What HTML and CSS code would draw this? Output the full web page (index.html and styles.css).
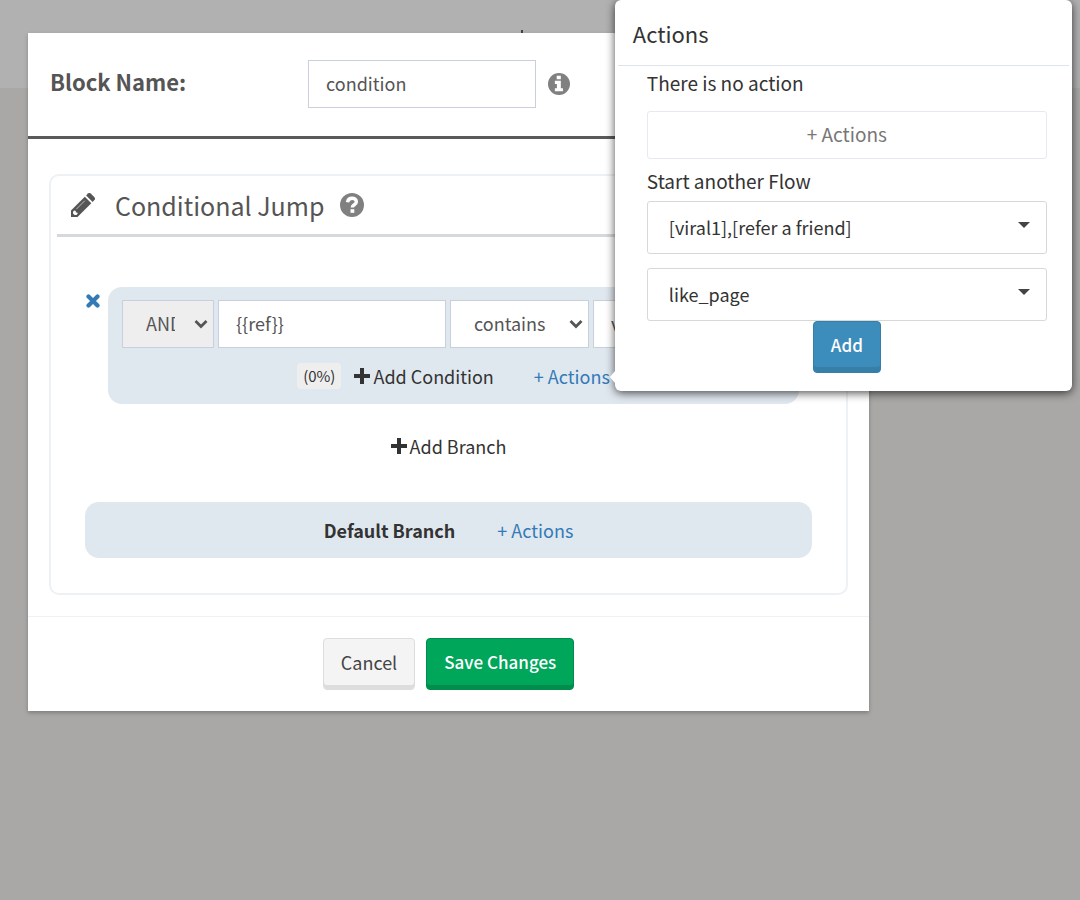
FILE: index.html
```
<!DOCTYPE html>
<html lang="en">

<head>
    <meta charset="UTF-8">
    <meta name="viewport" content="width=device-width, initial-scale=1.0">
    <title>Conditional Jump</title>
    <link rel="stylesheet" href="styles.css">
</head>

<body>
    <div class="page-header">
        <span class="marker"></span>
    </div>

    <div class="overlay">
        <div class="modal" role="dialog" aria-label="Edit block">
            <div class="modal-header">
                <label class="block-label" for="blockName">Block Name:</label>
                <input class="field block-name" type="text" id="blockName" value="condition">
                <svg class="icon-info" viewBox="0 0 24 24" aria-hidden="true">
                    <circle cx="12" cy="12" r="12" fill="#808080"/>
                    <path d="M9.500 3h4.500v3.800H9.500zM7.500 8.500H14v8h2.300V20H7.500v-3.500h2.200V12H7.500z" fill="#fff"/>
                </svg>
            </div>

            <div class="modal-body">
                <div class="panel">
                    <h2 class="panel-title">
                        <svg class="icon-pencil" viewBox="0 0 24 24" aria-hidden="true">
                            <path d="M0 24V17.500L13.800 3.700l6.500 6.500L6.500 24z" fill="#555"/>
                            <path d="M15.100 2.400L16.900.6a2 2 0 0 1 2.800 0l3.700 3.700a2 2 0 0 1 0 2.800l-1.800 1.800z" fill="#555"/>
                            <path d="M2 18.800l1.300-1.300 1.500.4v1.500h1.500l.4 1.400L5.400 22H3.600L2 20.400z" fill="#fff"/>
                            <path d="M5.300 16.200L13.800 7.700" stroke="#bbb" stroke-width="1"/>
                        </svg>
                        <span>Conditional Jump</span>
                        <svg class="icon-help" viewBox="0 0 24 24" aria-hidden="true">
                            <circle cx="12" cy="12" r="12" fill="#808080"/>
                            <path d="M7.500 9.300C8 6.500 9.800 5.300 12.100 5.300c2.300 0 4.300 1.300 4.300 3.500 0 3-4.100 2.800-4.100 5.600" fill="none" stroke="#fff" stroke-width="3.400"/>
                            <path d="M10.500 16.200h3.800v3.600h-3.800z" fill="#fff"/>
                        </svg>
                    </h2>

                    <div class="branches">
                        <div class="branch-row">
                            <button class="remove" type="button" aria-label="Remove branch">
                                <svg viewBox="0 0 14 14" aria-hidden="true">
                                    <path d="M2.500 2.500l9 9M11.500 2.500l-9 9" stroke="#337ab7" stroke-width="4.200" stroke-linecap="round"/>
                                </svg>
                            </button>
                            <div class="branch">
                                <div class="condition">
                                    <div class="select-wrap operator">
                                        <select class="field" aria-label="Operator">
                                            <option>AND</option>
                                            <option>OR</option>
                                        </select>
                                        <svg class="chevron" viewBox="0 0 14 10" aria-hidden="true">
                                            <path d="M1.500 2l5.500 5.500L12.500 2" fill="none" stroke="#555" stroke-width="2.800"/>
                                        </svg>
                                    </div>
                                    <input class="field variable" type="text" value="{{ref}}" aria-label="Variable">
                                    <div class="select-wrap comparison">
                                        <select class="field" aria-label="Comparison">
                                            <option>contains</option>
                                            <option>equals</option>
                                        </select>
                                        <svg class="chevron" viewBox="0 0 14 10" aria-hidden="true">
                                            <path d="M1.500 2l5.500 5.500L12.500 2" fill="none" stroke="#555" stroke-width="2.800"/>
                                        </svg>
                                    </div>
                                    <input class="field value" type="text" value="viral1" aria-label="Value">
                                </div>
                                <div class="branch-actions">
                                    <span class="percent">(0%)</span>
                                    <a class="add" href="#">
                                        <svg viewBox="0 0 16 16" aria-hidden="true"><path d="M6 0h4v6h6v4h-6v6H6v-6H0V6h6z" fill="#333"/></svg>
                                        Add Condition
                                    </a>
                                    <div class="popover-anchor">
                                        <a class="actions-link" href="#">+ Actions</a>
                                        <div class="popover">
                                            <h3 class="popover-title">Actions</h3>
                                            <div class="popover-body">
                                                <p>There is no action</p>
                                                <button class="btn-actions" type="button">+ Actions</button>
                                                <label for="flow">Start another Flow</label>
                                                <div class="select-wrap flow">
                                                    <select id="flow">
                                                        <option>[viral1],[refer a friend]</option>
                                                    </select>
                                                    <span class="caret"></span>
                                                </div>
                                                <div class="select-wrap flow">
                                                    <select aria-label="Block">
                                                        <option>like_page</option>
                                                    </select>
                                                    <span class="caret"></span>
                                                </div>
                                                <button class="btn btn-primary" type="button">Add</button>
                                            </div>
                                        </div>
                                    </div>
                                </div>
                            </div>
                        </div>

                        <a class="add add-branch" href="#">
                            <svg viewBox="0 0 16 16" aria-hidden="true"><path d="M6 0h4v6h6v4h-6v6H6v-6H0V6h6z" fill="#333"/></svg>
                            Add Branch
                        </a>

                        <div class="default-branch">
                            <strong>Default Branch</strong>
                            <a class="actions-link" href="#">+ Actions</a>
                        </div>
                    </div>
                </div>
            </div>

            <div class="modal-footer">
                <button class="btn btn-default" type="button">Cancel</button>
                <button class="btn btn-success" type="button">Save Changes</button>
            </div>
        </div>
    </div>
</body>

</html>
```
FILE: styles.css
```
* {
    box-sizing: border-box;
}

body {
    margin: 0;
    min-height: 100vh;
    background-color: #a9a8a6;
    color: #333;
    font-family: "Noto Sans CJK SC", "Open Sans", sans-serif;
    font-size: 18px;
    line-height: 26px;
}

input,
select,
button {
    font-family: inherit;
    font-size: 18px;
    line-height: 26px;
}

a {
    color: #337ab7;
    text-decoration: none;
}

.page-header {
    height: 88px;
    padding: 30px 0 0 521px;
    background-color: #b1b1b1;
}

.marker {
    display: block;
    width: 2px;
    height: 8px;
    background-color: #444;
}

.overlay {
    position: absolute;
    inset: 0;
    padding: 33px 211px 33px 28px;
}

.modal {
    background-color: #fff;
    box-shadow: 0 2px 4px rgba(0, 0, 0, 0.25);
}

.modal-header {
    display: flex;
    align-items: center;
    padding: 27px 22px 28px;
    border-bottom: 3px solid #5a5a5a;
}

.block-label {
    width: 258px;
    padding-bottom: 7px;
    color: #555;
    font-size: 22px;
    font-weight: bold;
}

.field {
    height: 48px;
    padding: 0 17px 2px;
    border: 1px solid #c9cfdc;
    border-radius: 0;
    background-color: #fff;
    color: #555;
}

.block-name {
    width: 228px;
}

.icon-info {
    width: 22px;
    height: 22px;
    margin-left: 12px;
}

.modal-body {
    padding: 35px 21px 21px;
}

.panel {
    padding: 0 6px 35px;
    border: 2px solid #eef1f4;
    border-radius: 10px;
}

.panel-title {
    display: flex;
    align-items: center;
    height: 61px;
    margin: 0;
    padding: 0 14px 1px;
    border-bottom: 3px solid #d5d9dd;
    color: #555;
    font-size: 25px;
    font-weight: normal;
}

.icon-pencil {
    width: 24px;
    height: 24px;
    margin-right: 20px;
}

.icon-help {
    width: 24px;
    height: 24px;
    margin-left: 16px;
}

.branches {
    display: flex;
    flex-direction: column;
    padding: 50px 28px 0;
}

.branch-row {
    display: flex;
    align-items: flex-start;
    gap: 8px;
    padding-right: 13px;
}

.remove {
    width: 15px;
    height: 14px;
    margin-top: 7px;
    padding: 0;
    border: none;
    background: none;
    cursor: pointer;
}

.remove svg {
    display: block;
    width: 14px;
    height: 14px;
    margin-left: 1px;
}

.branch {
    flex: 1;
    min-width: 0;
    padding: 13px 14px 15px;
    border-radius: 14px;
    background-color: #e0e8ef;
}

.condition {
    display: flex;
    gap: 4px;
}

.select-wrap {
    position: relative;
}

.select-wrap select {
    width: 100%;
    appearance: none;
}

.select-wrap .field {
    padding: 0 38px 2px 23px;
}

.operator {
    width: 92px;
}

.operator .field {
    background-color: #eee;
}

.variable {
    width: 228px;
}

.comparison {
    width: 139px;
}

.value {
    flex: 1;
    min-width: 0;
}

.chevron {
    position: absolute;
    top: 19px;
    right: 6px;
    width: 14px;
    height: 10px;
    pointer-events: none;
}

.branch-actions {
    display: flex;
    justify-content: center;
    align-items: center;
    margin-top: 15px;
}

.percent {
    margin-right: 13px;
    padding: 0 6px;
    border-radius: 4px;
    background-color: #eee;
    font-size: 15px;
}

.add {
    display: flex;
    align-items: center;
    gap: 3px;
    color: #333;
}

.add svg {
    width: 16px;
    height: 16px;
}

.add-branch {
    align-self: center;
    margin: 29px 0 43px;
}

.popover-anchor {
    position: relative;
    margin-left: 40px;
}

.default-branch {
    display: flex;
    justify-content: center;
    gap: 42px;
    padding: 15px;
    border-radius: 14px;
    background-color: #e0e8ef;
}

/* popover opens to the right of the link */
.popover {
    position: absolute;
    left: calc(100% + 5px);
    bottom: -2px;
    width: 457px;
    padding: 0 3px 18px;
    border-radius: 6px;
    background-color: #fff;
    box-shadow: 0 2px 10px rgba(0, 0, 0, 0.7);
}

.popover::before {
    content: "";
    position: absolute;
    left: -5px;
    bottom: 8px;
    border: 6px solid transparent;
    border-left: none;
    border-right: 5px solid #fff;
}

.popover-title {
    margin: 0;
    padding: 20px 15px 19px;
    border-bottom: 1px solid #dde4ec;
    font-size: 22px;
    font-weight: normal;
}

.popover-body {
    display: flex;
    flex-direction: column;
    padding: 4px 22px 0 29px;
    font-size: 19px;
}

.popover-body p {
    margin: 0 0 15px;
}

.btn-actions {
    height: 48px;
    margin-bottom: 9px;
    padding-bottom: 3px;
    border: 1px solid #e6eaf0;
    border-radius: 3px;
    background-color: #fff;
    color: #777;
    font-size: 19px;
    cursor: pointer;
}

.flow {
    margin-top: 7px;
}

.flow + .flow {
    margin-top: 14px;
}

.flow select {
    display: block;
    height: 53px;
    padding: 0 21px 1px;
    border: 1px solid #d8d8d8;
    border-radius: 3px;
    background-color: #fff;
    color: #333;
}

.caret {
    position: absolute;
    top: 21px;
    right: 17px;
    border: 6px solid transparent;
    border-top-color: #444;
    border-bottom: none;
    pointer-events: none;
}

.btn {
    height: 52px;
    padding: 0 17px 4px;
    border: 1px solid;
    border-radius: 4px;
    cursor: pointer;
}

.btn-primary {
    align-self: center;
    border-color: #367fa9;
    background-color: #3c8dbc;
    box-shadow: inset 0 -5px #367fa9;
    color: #fff;
    font-size: 17px;
    font-weight: 500;
}

.btn-default {
    border-color: #ddd;
    background-color: #f4f4f4;
    box-shadow: inset 0 -4px #ddd;
    color: #444;
}

.btn-success {
    border-color: #008d4c;
    background-color: #00a65a;
    box-shadow: inset 0 -4px #008d4c;
    color: #fff;
    font-size: 17px;
    font-weight: 500;
}

.modal-footer {
    display: flex;
    justify-content: center;
    gap: 11px;
    padding: 21px;
    border-top: 1px solid #f0f1f2;
}
```
